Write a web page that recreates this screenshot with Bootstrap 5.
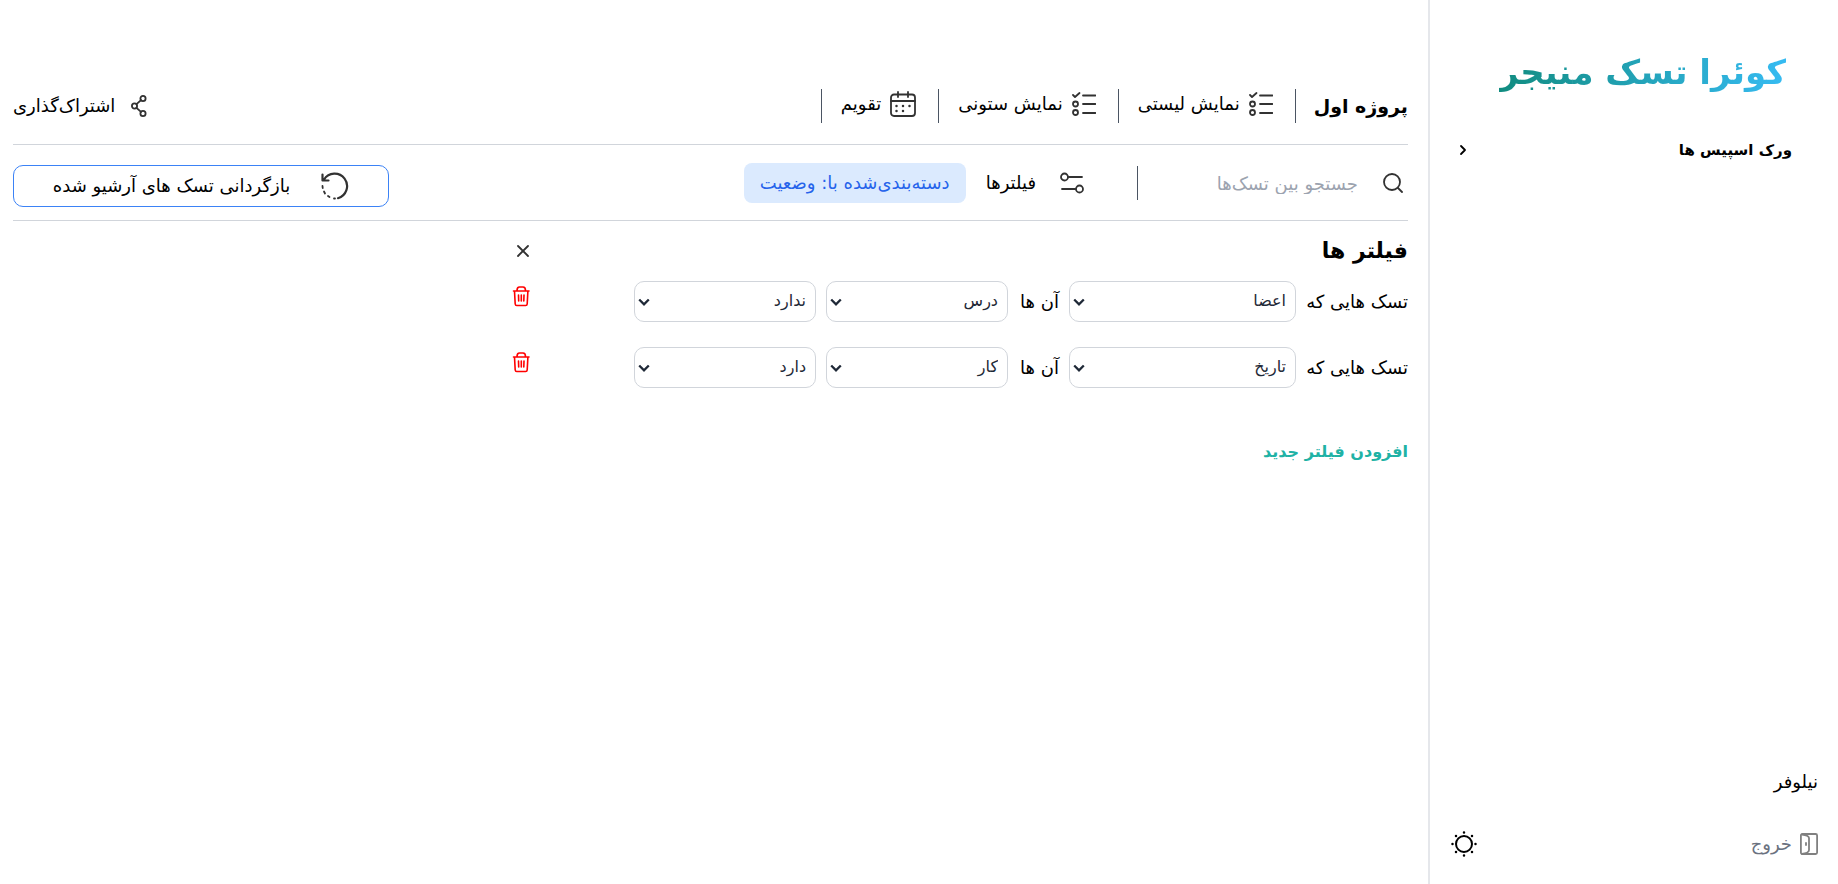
<!DOCTYPE html>
<html lang="fa" dir="rtl">
<head>
<meta charset="utf-8">
<meta name="viewport" content="width=device-width, initial-scale=1">
<title>کوئرا تسک منیجر</title>
<link rel="stylesheet" href="https://cdn.jsdelivr.net/npm/bootstrap@5.3.0/dist/css/bootstrap.min.css">
<style>
  body { font-family: "DejaVu Sans", sans-serif; font-size: 18px; line-height: 24px; color: #000; }
  svg { display: block; flex: none; fill: none; stroke: #323232; stroke-width: 1.8; stroke-linecap: round; stroke-linejoin: round; }
  .bare { border: 0; background: none; padding: 0; color: inherit; }
  .sidebar { flex: 0 0 410px; border-left: 2px solid #e5e7eb; padding: 44px 20px 26px; }
  .brand { font-size: 34px; line-height: 56px; padding-right: 32px; margin-bottom: 38px; }
  .brand span { background: linear-gradient(to left, #36bbf2, #118c80); -webkit-background-clip: text; background-clip: text; color: transparent; }
  .workspaces { font-size: 15px; padding: 0 26px 0 9px; }
  .board { min-width: 0; padding: 0 20px 0 13px; }
  .views { padding: 89px 0 21px; border-bottom: 1px solid #d1d5db; }
  .project-name { font-size: 19px; padding-left: 18px; }
  .view-item { height: 34px; padding: 0 22px 4px 19px; gap: 9px; }
  .rule-left { border-left: 1px solid #4b5563; }
  .rule-right { border-right: 1px solid #4b5563; }
  .tools { padding: 18px 0 13px; border-bottom: 1px solid #d1d5db; }
  .search-box { gap: 25px; height: 34px; padding-right: 5px; }
  .search-box input { width: 220px; height: 32px; border: 0; padding: 0; outline: 0; }
  .search-box input::placeholder { color: #9ca3af; opacity: 1; }
  .filter-btn { gap: 24px; margin-right: 53px; margin-left: 20px; }
  .grouping { background: #dbeafe; color: #2563eb; border-radius: 8px; height: 40px; width: 222px; }
  .restore { width: 376px; height: 42px; gap: 31px; margin-top: 2px; border: 1px solid #3b82f6; border-radius: 10px; }
  .filters { max-width: 896px; padding-top: 13px; }
  .filters-head { margin-bottom: 13px; }
  .filters h2 { font-size: 22px; line-height: 34px; }
  .filter-row { gap: 10px; margin-bottom: 25px; }
  .filter-row .lbl { width: 102px; }
  .filter-row .lbl-mid { width: 41px; }
  .filter-row .form-select {
    width: 182px; height: 41px; font-size: 16px; line-height: 24px; color: #1f2937; padding: 2px 9px 4px 24px;
    border-color: #d1d5db; border-radius: 10px; background-size: 12px 12px; background-position: left 3px center;
    background-image: url("data:image/svg+xml,%3Csvg xmlns='http://www.w3.org/2000/svg' viewBox='0 0 12 12'%3E%3Cpath d='M1.2 3.5 6 8.300 10.800 3.500' fill='none' stroke='%231f2937' stroke-width='2.300'/%3E%3C/svg%3E");
  }
  .filter-row .select-wide { width: 227px; }
  .add-filter { font-size: 16px; color: #20b2a5; margin-top: 27px; }
  .quit { color: #6b7280; }
</style>
</head>
<body class="bg-white">
<div class="d-flex min-vh-100">
  <aside class="sidebar d-flex flex-column">
    <h1 class="brand fw-bold"><span>کوئرا تسک منیجر</span></h1>
    <button type="button" class="bare workspaces fw-bold d-flex justify-content-between align-items-center">
      <span>ورک اسپیس ها</span>
      <svg width="8" height="12" viewBox="0 0 8 12" style="stroke:#000"><path d="M2 2l4 4-4 4"/></svg>
    </button>
    <div class="mt-auto">
      <div class="mb-4 pb-2">نیلوفر</div>
      <div class="d-flex justify-content-between align-items-center pt-1">
        <a href="#" class="quit d-flex align-items-center gap-2 text-decoration-none">
          <svg width="18" height="22" viewBox="0 0 18 22" style="stroke:#808080"><rect x="0.900" y="1" width="16.200" height="20" rx="1.500"/><path d="M2 1.500c3.500.5 7 1.500 7 3.500v12c0 2-3.500 3.500-7 4M6 10v2"/></svg>
          <span>خروج</span>
        </a>
        <button type="button" class="bare" aria-label="تغییر تم">
          <svg width="28" height="28" viewBox="0 0 28 28" style="stroke:#000"><circle cx="14" cy="14" r="8" stroke-width="2"/><path stroke-width="2.500" d="M14 2.500v0M14 25.500v0M2.500 14v0M25.500 14v0M6 6v0M22 6v0M6 22v0M22 22v0"/></svg>
        </button>
      </div>
    </div>
  </aside>

  <main class="board flex-grow-1">
    <div class="views d-flex justify-content-between align-items-center">
      <nav class="d-flex align-items-center">
        <div class="project-name fw-bold">پروژه اول</div>
        <a href="#" class="view-item rule-left rule-right d-flex align-items-center text-reset text-decoration-none">
          <svg width="24" height="24" viewBox="0 0 24 24"><path d="M1 3l2 2 4.500-4M11 3.500h12.500M11 12h12.500M11 21h12.500"/><circle cx="3.500" cy="12" r="2.500"/><circle cx="3.500" cy="20.500" r="2.500"/></svg>
          <span>نمایش لیستی</span>
        </a>
        <a href="#" class="view-item rule-left d-flex align-items-center text-reset text-decoration-none">
          <svg width="24" height="24" viewBox="0 0 24 24"><path d="M1 3l2 2 4.500-4M11 3.500h12.500M11 12h12.500M11 21h12.500"/><circle cx="3.500" cy="12" r="2.500"/><circle cx="3.500" cy="20.500" r="2.500"/></svg>
          <span>نمایش ستونی</span>
        </a>
        <a href="#" class="view-item rule-left d-flex align-items-center text-reset text-decoration-none">
          <svg width="26" height="26" viewBox="0 0 26 26"><rect x="1" y="3.500" width="24" height="21.500" rx="3"/><path d="M1 10h24M8 1v5M18 1v5"/><path stroke-width="2.500" d="M6.500 15v0M13 15v0M19.500 15v0M6.500 20v0M13 20v0"/></svg>
          <span>تقویم</span>
        </a>
      </nav>
      <a href="#" class="d-flex align-items-center gap-3 text-reset text-decoration-none">
        <svg width="16" height="22" viewBox="0 0 16 22"><circle cx="12" cy="3.500" r="2.600"/><circle cx="3.500" cy="11" r="2.600"/><circle cx="12" cy="18.500" r="2.600"/><path d="M5.500 9.200l4.500-4M5.500 12.800l4.500 4"/></svg>
        <span>اشتراک‌گذاری</span>
      </a>
    </div>

    <div class="tools d-flex justify-content-between">
      <div class="d-flex align-items-center align-self-start">
        <label class="search-box rule-left d-flex align-items-center">
          <svg width="20" height="20" viewBox="0 0 20 20"><circle cx="9" cy="9" r="8"/><path d="M15 15l4 4"/></svg>
          <input type="text" placeholder="جستجو بین تسک‌ها" aria-label="جستجو بین تسک‌ها">
        </label>
        <button type="button" class="bare filter-btn d-flex align-items-center">
          <svg width="24" height="24" viewBox="0 0 24 24"><circle cx="4.500" cy="6" r="3.500"/><path d="M8.500 6H22M2 18h13.500"/><circle cx="19.500" cy="18" r="3.500"/></svg>
          <span>فیلترها</span>
        </button>
        <button type="button" class="bare grouping">دسته‌بندی‌شده با: وضعیت</button>
      </div>
      <button type="button" class="bare restore d-flex justify-content-center align-items-center align-self-end">
        <svg width="28" height="28" viewBox="0 0 28 28"><path stroke-width="2.200" d="M3 7.500A12.500 12.500 0 1 1 17 26.200M1.500 2.500v6H7.500"/><path stroke-width="1.800" d="M1.500 14l.2 2M3 19.500l1 2M7 24l1.500 1M13 26.500h1"/></svg>
        <span>بازگردانی تسک های آرشیو شده</span>
      </button>
    </div>

    <section class="filters">
      <div class="filters-head d-flex justify-content-between align-items-center">
        <h2 class="fw-bold mb-0">فیلتر ها</h2>
        <button type="button" class="bare" aria-label="بستن">
          <svg width="18" height="14" viewBox="0 0 18 14"><path d="M6 2l10 10M16 2L6 12"/></svg>
        </button>
      </div>

      <div class="filter-row d-flex align-items-center">
        <label class="lbl text-nowrap" for="f1">تسک هایی که</label>
        <select id="f1" class="form-select select-wide"><option>اعضا</option><option>تاریخ</option></select>
        <label class="lbl-mid text-nowrap" for="c1">آن ها</label>
        <select id="c1" class="form-select"><option>درس</option><option>کار</option></select>
        <select class="form-select" aria-label="وضعیت"><option>ندارد</option><option>دارد</option></select>
        <button type="button" class="bare me-auto align-self-start pt-1" aria-label="حذف">
          <svg width="18" height="22" viewBox="0 0 18 22" style="stroke:#f00"><path stroke-width="1.600" d="M1.500 6h15.500M2.500 6l.7 13c.1 1 .6 1.500 1.500 1.500h9c.9 0 1.400-.5 1.500-1.500l.7-13M5 5.500c0-2.700 1-3.500 2.500-3.500h3.500c1.500 0 2.500.8 2.500 3.500M6.500 10l.2 6M9.300 10v6M12 10l-.2 6"/></svg>
        </button>
      </div>
      <div class="filter-row d-flex align-items-center">
        <label class="lbl text-nowrap" for="f2">تسک هایی که</label>
        <select id="f2" class="form-select select-wide"><option>تاریخ</option><option>اعضا</option></select>
        <label class="lbl-mid text-nowrap" for="c2">آن ها</label>
        <select id="c2" class="form-select"><option>کار</option><option>درس</option></select>
        <select class="form-select" aria-label="وضعیت"><option>دارد</option><option>ندارد</option></select>
        <button type="button" class="bare me-auto align-self-start pt-1" aria-label="حذف">
          <svg width="18" height="22" viewBox="0 0 18 22" style="stroke:#f00"><path stroke-width="1.600" d="M1.500 6h15.500M2.500 6l.7 13c.1 1 .6 1.500 1.500 1.500h9c.9 0 1.400-.5 1.500-1.500l.7-13M5 5.500c0-2.700 1-3.500 2.500-3.500h3.500c1.500 0 2.500.8 2.500 3.500M6.500 10l.2 6M9.300 10v6M12 10l-.2 6"/></svg>
        </button>
      </div>

      <button type="button" class="bare add-filter fw-bold">افزودن فیلتر جدید</button>
    </section>
  </main>
</div>
<script src="https://cdn.jsdelivr.net/npm/bootstrap@5.3.0/dist/js/bootstrap.bundle.min.js"></script>
</body>
</html>
